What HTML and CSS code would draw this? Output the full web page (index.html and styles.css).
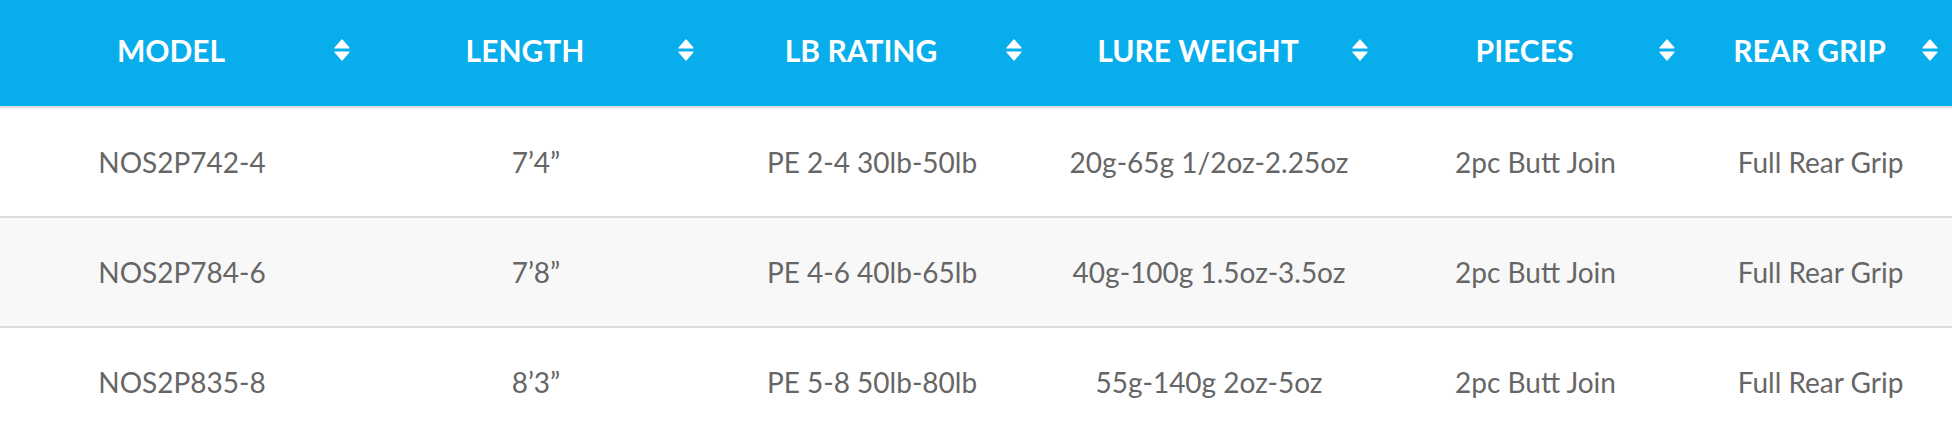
FILE: index.html
```html
<!DOCTYPE html>
<html lang="en">
<head>
<meta charset="utf-8">
<title>Rod specs</title>
<link rel="stylesheet" href="styles.css">
</head>
<body>
<table class="specs">
  <colgroup>
    <col class="c1"><col class="c2"><col class="c3"><col class="c4"><col class="c5"><col class="c6">
  </colgroup>
  <thead>
    <tr>
      <th><div class="th-inner"><span class="label">MODEL</span><svg class="sort" viewBox="0 0 16 22"><path d="M8 1 L15 9 H1 Z M1 13 H15 L8 21 Z"/></svg></div></th>
      <th><div class="th-inner"><span class="label">LENGTH</span><svg class="sort" viewBox="0 0 16 22"><path d="M8 1 L15 9 H1 Z M1 13 H15 L8 21 Z"/></svg></div></th>
      <th><div class="th-inner"><span class="label">LB RATING</span><svg class="sort" viewBox="0 0 16 22"><path d="M8 1 L15 9 H1 Z M1 13 H15 L8 21 Z"/></svg></div></th>
      <th><div class="th-inner"><span class="label">LURE WEIGHT</span><svg class="sort" viewBox="0 0 16 22"><path d="M8 1 L15 9 H1 Z M1 13 H15 L8 21 Z"/></svg></div></th>
      <th><div class="th-inner"><span class="label">PIECES</span><svg class="sort" viewBox="0 0 16 22"><path d="M8 1 L15 9 H1 Z M1 13 H15 L8 21 Z"/></svg></div></th>
      <th><div class="th-inner"><span class="label">REAR GRIP</span><svg class="sort" viewBox="0 0 16 22"><path d="M8 1 L15 9 H1 Z M1 13 H15 L8 21 Z"/></svg></div></th>
    </tr>
  </thead>
  <tbody>
    <tr>
      <td>NOS2P742-4</td><td>7’4”</td><td>PE 2-4 30lb-50lb</td><td>20g-65g 1/2oz-2.25oz</td><td>2pc Butt Join</td><td>Full Rear Grip</td>
    </tr>
    <tr class="alt">
      <td>NOS2P784-6</td><td>7’8”</td><td>PE 4-6 40lb-65lb</td><td>40g-100g 1.5oz-3.5oz</td><td>2pc Butt Join</td><td>Full Rear Grip</td>
    </tr>
    <tr>
      <td>NOS2P835-8</td><td>8’3”</td><td>PE 5-8 50lb-80lb</td><td>55g-140g 2oz-5oz</td><td>2pc Butt Join</td><td>Full Rear Grip</td>
    </tr>
  </tbody>
</table>
</body>
</html>
```
FILE: styles.css
```css
html, body {
  margin: 0;
  padding: 0;
  background: #ffffff;
}

.specs {
  width: 1952px;
  border-collapse: collapse;
  table-layout: fixed;
  font-family: Lato, "Open Sans", sans-serif;
}

.c1 { width: 364px; }
.c2 { width: 344px; }
.c3 { width: 328px; }
.c4 { width: 346px; }
.c5 { width: 307px; }
.c6 { width: 263px; }

.specs th {
  background: #08aeec;
  color: #ffffff;
  height: 107px;
  padding: 0 14px 7px 14px;
  box-sizing: border-box;
  border-bottom: 2px solid #dddddd;
  font-weight: 700;
  font-size: 30px;
  vertical-align: middle;
}

.th-inner {
  display: flex;
  align-items: center;
}

.label {
  flex: 1;
  text-align: center;
  white-space: nowrap;
}

.sort {
  width: 16px;
  height: 22px;
  margin-left: 6px;
  flex: none;
  fill: #ffffff;
  stroke: #ffffff;
  stroke-width: 1.2;
  stroke-linejoin: round;
}

.specs td {
  height: 108px;
  padding: 0;
  text-align: center;
  vertical-align: middle;
  color: #666666;
  font-size: 28px;
  font-weight: 400;
  border-bottom: 2px solid #dddddd;
  white-space: nowrap;
}

.specs tbody tr:last-child td {
  border-bottom: none;
}

.specs tr.alt td {
  background: #f8f8f8;
}
```
